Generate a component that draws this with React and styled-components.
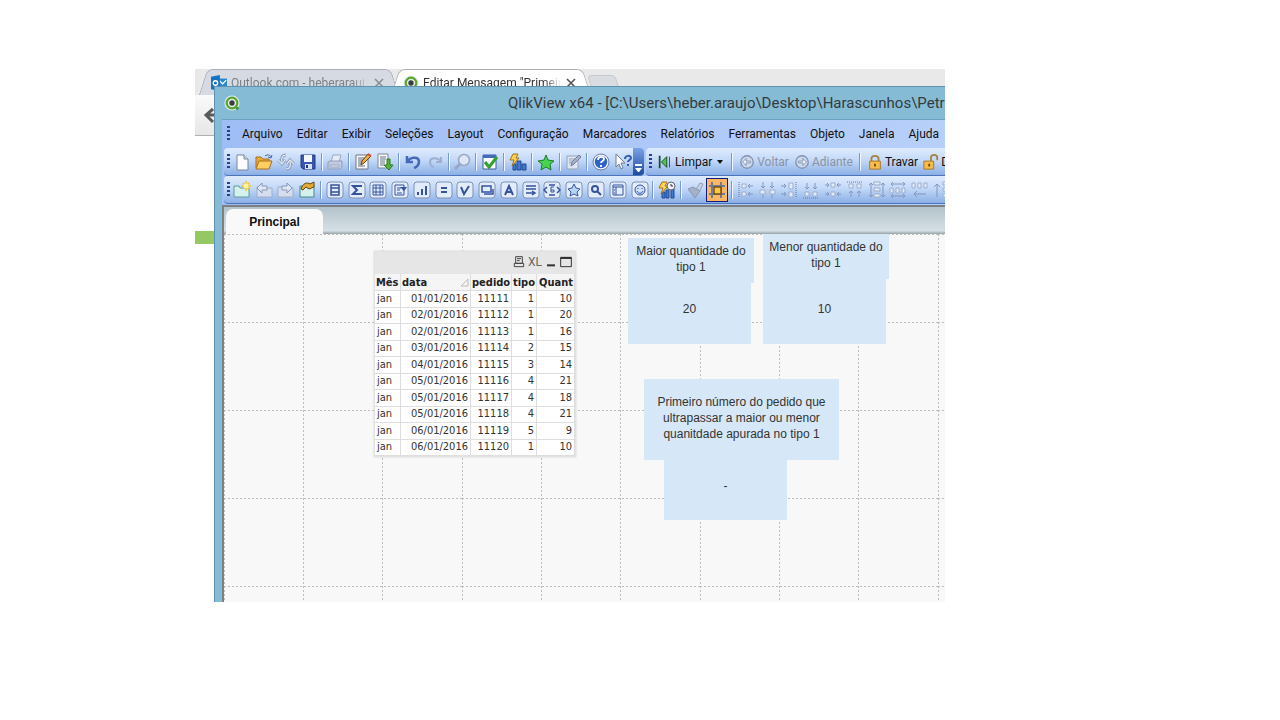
import React from "react";
import styled, { createGlobalStyle, css } from "styled-components";

const GlobalStyle = createGlobalStyle`
  * { box-sizing: border-box; }
  body { margin: 0; background: #fff; font-family: Roboto, "Liberation Sans", sans-serif; color: #111; }
  button { font: inherit; color: inherit; background: none; border: 0; padding: 0; margin: 0; }
  svg { display: block; flex: none; }
`;

const Page = styled.main`
  min-height: 100vh;
  padding: 69px 335px 118px 195px;
  display: flex;
`;

const Desktop = styled.div`
  flex: 1;
  min-width: 0;
  display: grid;
  grid-template-columns: minmax(0, 1fr);
  overflow: hidden;
`;

/* ---------- browser window at the back ---------- */

const Browser = styled.section`
  grid-area: 1 / 1;
  background: #fff;
`;

const TabStrip = styled.div`
  display: flex;
  height: 26px;
  padding-left: 8px;
  background: #e9e9e9;
`;

const BrowserTab = styled.button`
  position: relative;
  z-index: 0;
  display: flex;
  align-items: center;
  gap: 4px;
  width: 192px;
  padding: 2px 10px 0 8px;
  font-size: 12px;
  color: ${(p) => (p.$active ? "#333" : "#7b7f86")};
  &::before, &::after {
    content: "";
    position: absolute;
    z-index: -1;
    top: 0;
    bottom: 0;
    background: ${(p) => (p.$active ? "#fff" : "#d6dbe3")};
    border: 1px solid #a9adb3;
    border-bottom: 0;
  }
  &::before { left: 0; right: 50%; border-right: 0; border-radius: 6px 0 0 0; transform: skewX(-18deg); }
  &::after { right: 0; left: 49%; border-left: 0; border-radius: 0 6px 0 0; transform: skewX(18deg); }
`;

const TabLabel = styled.span`
  flex: 1;
  overflow: hidden;
  white-space: nowrap;
  text-align: left;
  mask-image: linear-gradient(to right, #000 88%, transparent);
`;

const NewTab = styled.button`
  width: 28px;
  height: 18px;
  margin: 6px 0 0 3px;
  border: 1px solid #c4c8cc;
  border-radius: 4px;
  background: #d9dde2;
  transform: skewX(18deg);
`;

const AddressBar = styled.div`
  display: flex;
  align-items: center;
  height: 41px;
  padding-left: 8px;
  background: linear-gradient(#fafafa, #e6e6e6);
  border-bottom: 1px solid #b0b0b0;
`;

const GreenBand = styled.div`
  height: 13px;
  margin-top: 95px;
  background: #95c765;
`;

/* ---------- QlikView window ---------- */

const AppWindow = styled.section`
  grid-area: 1 / 1;
  z-index: 1;
  min-width: 0;
  margin: 17px 0 0 19px;
  padding-left: 7px;
  display: flex;
  flex-direction: column;
  background: #86bbd6;
  border: solid #5d93ae;
  border-width: 1px 0 0 1px;
`;

const TitleBar = styled.header`
  display: flex;
  align-items: center;
  height: 33px;
  padding-left: 2px;
  overflow: hidden;
  border-bottom: 1px solid #6c9fc0;
`;

const WindowTitle = styled.h1`
  margin: 0 0 0 268px;
  font: 400 15px Roboto, sans-serif;
  white-space: nowrap;
  color: #333b40;
`;

const MenuBar = styled.nav`
  display: flex;
  align-items: center;
  height: 28px;
  overflow: hidden;
  padding-left: 5px;
  background: linear-gradient(to right, #9fbdf5, #b7d0fa);
`;

const MenuItems = styled.div`
  display: flex;
  gap: 14px;
  margin-left: 12px;
  font-size: 12px;
  white-space: nowrap;
`;

const Grip = styled.span`
  flex: none;
  width: 3px;
  height: 16px;
  background: repeating-linear-gradient(#27418a 0 2px, transparent 2px 4px);
`;

const Toolbars = styled.div`
  display: flex;
  flex-direction: column;
  padding: 0 0 1px 2px;
  background: linear-gradient(to right, #9fbdf5, #b7d0fa);
`;

const ToolRow = styled.div`
  display: flex;
  gap: 2px;
  overflow: hidden;
`;

const Bar = styled.div`
  display: flex;
  align-items: center;
  flex: ${(p) => (p.$grow ? "1 1 0" : "none")};
  min-width: 0;
  height: 28px;
  padding-left: 3px;
  overflow: hidden;
  border-bottom: 1px solid #4b75ba;
  border-radius: 4px ${(p) => (p.$grow ? "0 0" : "4px 4px")} 4px;
  background: linear-gradient(#dfebfd, #c3d9f8 45%, #8bafe6);
`;

const Tools = styled.div`
  display: flex;
  flex: none;
  align-items: center;
  justify-content: space-between;
  width: ${(p) => p.$width}px;
  margin-left: 2px;
`;

const Separator = styled.span`
  flex: none;
  width: 4px;
  height: 18px;
  background: linear-gradient(to right, transparent 1px, #7499d6 1px 2px, #f1f6ff 2px 3px, transparent 3px);
`;

const ToolButton = styled.button`
  flex: none;
  display: flex;
  align-items: center;
  justify-content: center;
  width: 20px;
  height: 24px;
  ${(p) => p.$pressed && css`
    width: 22px;
    background: #fdb663;
    border: 1px solid #101c7c;
  `}
`;

const TextTool = styled.button`
  display: flex;
  flex: none;
  align-items: center;
  gap: 2px;
  font-size: 12px;
  white-space: nowrap;
  color: ${(p) => (p.disabled ? "#8b93a4" : "#111")};
`;

const TextTools = styled.div`
  display: flex;
  align-items: center;
  gap: 5px;
  margin-left: 5px;
`;

const Overflow = styled.button`
  display: flex;
  align-items: flex-end;
  justify-content: center;
  align-self: stretch;
  width: 11px;
  margin-left: auto;
  padding-bottom: 3px;
  background: linear-gradient(#7aa2e6, #1f4b9f);
`;

/* ---------- sheet ---------- */

const Document = styled.div`
  flex: 1;
  display: flex;
  flex-direction: column;
  border: solid #7d7f82;
  border-width: 2px 0 0 2px;
`;

const SheetTabs = styled.div`
  display: flex;
  align-items: flex-end;
  height: 27px;
  padding-left: 2px;
  background: linear-gradient(#b3c3cb, #d5e0e5 88%, #98a3a9);
`;

const SheetTab = styled.button`
  width: 97px;
  height: 25px;
  border-radius: 7px 7px 0 0;
  background: #f9f9f9;
  font: 700 12px "Liberation Sans", sans-serif;
`;

const Sheet = styled.div`
  position: relative;
  flex: 1;
  min-height: 360px;
  overflow: hidden;
  background: #f8f8f8;
`;

const GridLines = styled.svg`
  position: absolute;
  width: 100%;
  height: 100%;
`;

const TextObject = styled.div`
  position: absolute;
  left: ${(p) => p.$x}px;
  top: ${(p) => p.$y}px;
  width: ${(p) => p.$w}px;
  height: ${(p) => p.$h}px;
  padding-bottom: 3px;
  display: flex;
  align-items: center;
  justify-content: center;
  background: #d6e7f7;
  color: #333;
  font: 12px/16px "Liberation Sans", sans-serif;
  text-align: center;
  white-space: pre-line;
`;

const TableObject = styled.section`
  position: absolute;
  left: 150px;
  top: 17px;
  width: 202px;
  border: 1px solid #e2e2e2;
  box-shadow: 0 0 2px #d0d0d0;
  background: #fff;
`;

const Caption = styled.div`
  display: flex;
  align-items: center;
  justify-content: flex-end;
  gap: 3px;
  height: 22px;
  padding: 0 3px 2px 0;
  background: #e6e6e6;
`;

const ExcelButton = styled.button`
  font: 12px "Liberation Sans Narrow", Roboto, sans-serif;
  color: #666;
`;

const DataTable = styled.table`
  width: 100%;
  table-layout: fixed;
  border-collapse: separate;
  border-spacing: 0;
  height: 182px;
  font: 11px/14px "DejaVu Sans Condensed", "DejaVu Sans", sans-serif;
  color: #333;
  th, td {
    padding: 0 2px;
    border: solid #dedede;
    border-width: 0 1px 1px 0;
    text-align: right;
    white-space: nowrap;
  }
  th { height: 17px; background: #f5f5f5; padding: 1px 1px 0; text-align: left; color: #222; }
  th:last-child { text-align: right; }
  td:first-child { text-align: left; }
`;

const SortHead = styled.span`
  display: flex;
  align-items: center;
  justify-content: space-between;
`;

/* ---------- icons ---------- */

const Icon = ({ children, size = 18 }) => (
  <svg width={size} height={size} viewBox="0 0 18 18" fill="none" aria-hidden="true">{children}</svg>
);

const navy = "#3653a0";
const grey = "#8296bd";

const icons = {
  file: <><path d="M4 2h7l4 4v11H4z" fill="#fdfdfd" stroke="#7c8797" /><path d="M11 2v4h4" fill="#d5dbe4" stroke="#7c8797" /></>,
  open: <><path d="M1 15V4h5l2 2h6v3" fill="#e8a93a" stroke="#a8701c" /><path d="M1 16 4 8h13l-3 8z" fill="#ffcd62" stroke="#a8701c" /><path d="M10 3c3-2 5-1 6 1m1-2-1 3-3-1" stroke="#3f62ac" /></>,
  refresh: <><path d="M9 2C5 2 4 5 5 9M1 7l4 4 3-4M9 16c4 0 5-3 4-7m-3 2 3-4 4 4" stroke="#8b9bb9" strokeWidth="3" /><path d="M9 2C5 2 4 5 5 9M1 7l4 4 3-4M9 16c4 0 5-3 4-7m-3 2 3-4 4 4" stroke="#e6ecf6" strokeWidth="1.2" /></>,
  save: <><path d="M2 2h14v14H4l-2-2z" fill="#3a55ae" stroke="#243a84" /><path d="M5 2h8v7H5z" fill="#f4f7fc" /><path d="M6 11h7v5H6z" fill="#dbe2ef" /><path d="M7 12h2v3H7z" fill="#243a84" /></>,
  print: <><path d="m5 9 2-7h8l-2 7" fill="#e7edf7" stroke="#9aa8c1" /><path d="m2 9 2-1h12v6l-2 2H2z" fill="#c1cce0" stroke="#8f9eba" /><path d="M4 12h9v2H4z" fill="#e2e9f4" stroke="#9aa8c1" /></>,
  edit: <><path d="M2 2h12v14H2z" fill="#f8f8f8" stroke="#6f7785" /><path d="M4 5h7M4 7h6M4 9h5M4 11h4M4 13h7" stroke="#636d7d" /><path d="m7 12 1-4 6-7 3 2-7 7z" fill="#f3b13c" stroke="#5c421d" /><path d="m14 1 3 2" stroke="#d2493f" strokeWidth="2" /></>,
  export: <><path d="M2 1h10v14H2z" fill="#f8f8f8" stroke="#7c8797" /><path d="M4 4h6M4 6h6M4 8h5M4 10h5M4 12h4" stroke="#6b7686" /><path d="M11 6h3v6h3l-4 5-5-5h3z" fill="#51b23c" stroke="#2c7a24" /></>,
  undo: <path d="M3 3v6h6M3 9c3-5 11-6 12-1 0 3-2 6-5 7" stroke="#4669b8" strokeWidth="2.6" />,
  redo: <path d="M15 4v5h-5M15 9C12 4 4 4 4 9c0 3 2 5 4 5" stroke="#9fb0cf" strokeWidth="2.2" />,
  search: <><circle cx="11" cy="7" r="5.5" fill="#dce6f4" stroke="#98a7c2" strokeWidth="1.5" /><path d="m7 11-5 5" stroke="#98a7c2" strokeWidth="3" /></>,
  check: <><path d="M2 2h13v14H2z" fill="#fff" stroke="#3a5ba2" /><path d="M2 2h13v3H2z" fill="#446bb9" /><path d="m4 9 4 5 8-10" stroke="#2fa12c" strokeWidth="3" /></>,
  chart: <><path d="M4 11h3v6H4zM8 8h4v9H8zM13 11h4v6h-4z" fill="#3f7ad1" stroke="#23498f" /><path d="M4 1h5L7 5h3l-7 8 2-6H1z" fill="#ffd54a" stroke="#a5701e" /></>,
  star: <path d="m9 2 2 5 6 1-4 3 1 6-5-3-5 3 1-6-4-3 6-1z" fill="#49d34b" stroke="#1c7a31" />,
  note: <><path d="M3 3h11v13H3z" fill="#dde5f2" stroke="#94a2bc" /><path d="M5 6h6M5 8h5M5 10h3" stroke="#94a2bc" /><path d="m7 13 1-4 7-7 2 2-7 7z" fill="#a7b4cc" stroke="#6d7d9b" /></>,
  help: <><circle cx="9" cy="9" r="7" fill="#2f62c8" stroke="#f5f8ff" strokeWidth="1.5" /><circle cx="9" cy="9" r="8" stroke="#6b7fa8" /><path d="M6 7c0-4 6-4 6-1 0 2-3 2-3 4m0 2v2" stroke="#fff" strokeWidth="1.8" /></>,
  whats: <><path d="M2 1v13l3-3 2 5 2-1-2-5h4z" fill="#fff" stroke="#6e7c94" /><path d="M11 6c0-4 6-4 6-1 0 2-3 2-3 4m0 2v2" stroke="#2f5fb8" strokeWidth="2" /></>,
  newSheet: <><path d="M1 16V5h5l1 2h9v9z" fill="#d5f1ee" stroke="#5b9c9c" /><path d="M13 0v10M8 5h10M10 2l6 6M16 2l-6 6" stroke="#f4c327" strokeWidth="1.5" /><circle cx="13" cy="5" r="2.5" fill="#fff3a0" /></>,
  prev: <><path d="M2 16V6h5l1 1h9v9z" fill="#d4deee" stroke="#9eadc7" /><path d="m2 7 5-5v3h5v4H7v3z" fill="#dfe7f4" stroke="#8797b6" /></>,
  next: <><path d="M1 16V6h5l1 1h9v9z" fill="#d4deee" stroke="#9eadc7" /><path d="m15 7-5-5v3H5v4h5v3z" fill="#dfe7f4" stroke="#8797b6" /></>,
  props: <><path d="M2 16V5h14v11z" fill="#d5f1ee" stroke="#438a86" /><path d="M3 8c2-6 6-7 9-5l4-2v5l-5 2-3-2-3 3z" fill="#e4aa37" stroke="#604316" /></>,
  brush: <><path d="m10 8 4-6 3 1-3 7z" fill="#c6d0e1" stroke="#95a3bd" /><path d="m2 8 5-2 7 4-5 7z" fill="#a4b1ca" stroke="#8997b3" /></>,
  gridSnap: <><path d="M1 5h16M1 13h16M4 1v16M13 1v16" stroke="#6e7d92" strokeWidth="2" /><path d="M6 6h7v7H6z" fill="#fbc841" stroke="#7a4c12" strokeWidth="1.5" /></>,
  chartClock: <><path d="M4 11h3v6H4zM8 9h3v8H8zM13 8h3v9h-3z" fill="#3f7ad1" stroke="#23498f" /><path d="M4 1h5L7 5h3l-7 8 2-6H1z" fill="#ffd54a" stroke="#a5701e" /><circle cx="13" cy="5" r="4" fill="#eef1f5" stroke="#5d6570" /><path d="M13 3v2h2" stroke="#333" /></>,
  lock: <><path d="M5 9V5c0-4 8-4 8 0v4" stroke="#a38342" strokeWidth="2" /><path d="M3 8h12v9H3z" fill="#f6bd4a" stroke="#a8701c" /><path d="M9 11v3" stroke="#70450d" strokeWidth="2" /></>,
  unlock: <><path d="M9 9V4c0-4 7-4 7 0v3" stroke="#a38342" strokeWidth="2" /><path d="M1 8h11v9H1z" fill="#f6bd4a" stroke="#a8701c" /><path d="M7 11v3" stroke="#70450d" strokeWidth="2" /></>,
  clear: <><path d="M3 2v14" stroke="#1c4a2a" strokeWidth="2" /><path d="M11 3v12L5 9z" fill="#49c653" stroke="#173f22" /><path d="M14 3v12" stroke="#1c4a2a" /></>,
  back: <><circle cx="9" cy="9" r="7" fill="#cdd9ec" stroke="#8191b1" strokeWidth="1.5" /><path d="m4 9 4-4v3h5v2H8v3z" fill="#eef3fb" stroke="#7d8eb0" /></>,
  forward: <><circle cx="9" cy="9" r="7" fill="#cdd9ec" stroke="#8191b1" strokeWidth="1.5" /><path d="m14 9-4-4v3H5v2h5v3z" fill="#eef3fb" stroke="#7d8eb0" /></>,
};

const glyphs = {
  list: <path d="M5 4h8v10H5zM5 7h8M5 11h8" stroke={navy} strokeWidth="1.5" />,
  sum: <path d="M13 6V5H5l4 4-4 4h8v-1" stroke={navy} strokeWidth="2" />,
  table: <path d="M4 4h10v10H4zM4 7h10M4 11h10M7 4v10M11 4v10" stroke={navy} />,
  multi: <><path d="M4 4h9v10H4zM6 7h4M6 9h3M6 12h5" stroke={navy} /><path d="M9 6h7l-3 4z" fill={navy} /></>,
  bars: <path d="M5 14v-3M9 14V8M13 14V5" stroke={navy} strokeWidth="2" />,
  input: <path d="M6 7h6M6 11h6" stroke={navy} strokeWidth="2" />,
  current: <path d="m5 6 3 7 5-8" stroke={navy} strokeWidth="2" />,
  button: <path d="M4 5h9v6H4zM6 13h9V8" stroke={navy} strokeWidth="1.5" />,
  text: <path d="m5 14 4-9 4 9M6 11h6" stroke={navy} strokeWidth="2" />,
  line: <path d="M4 5h10M4 8h10M4 12h9m-3-2 3 2-3 2" stroke={navy} strokeWidth="1.5" />,
  slider: <><path d="M6 4h6M6 14h6M4 6 1 9l3 3M14 6l3 3-3 3" stroke={navy} strokeWidth="1.5" /><path d="M11 6H8v5h3V9H8" stroke={navy} /></>,
  bookmark: <path d="m9 3 2 4 4 1-3 3 1 4-4-2-4 2 1-4-3-3 4-1z" fill="#b6d4f6" stroke={navy} />,
  find: <path d="M11 8a3 3 0 1 1-6 0 3 3 0 0 1 6 0m-1 2 4 4" stroke={navy} strokeWidth="2" />,
  container: <path d="M4 4h10v10H4zM4 6h10M7 6v8M5 9h1M5 12h1" stroke={navy} />,
  custom: <><circle cx="9" cy="9" r="5" fill="#cfe1fa" stroke={navy} /><path d="M7 7v1M11 7v1M6 10c1 3 5 3 6 0" stroke={navy} /></>,
};

/* each alignment icon: its boxes, then its arrows and guides */
const aligns = {
  left: ["M5 3h4v4H5zM5 11h4v4H5z", "M16 5h-5m2-2-2 2 2 2M16 13h-5m2-2-2 2 2 2", "M2 1v16"],
  centerH: ["M1 9h5v4H1zM11 9h5v4h-5z", "M4 1v6m-2-2 2 2 2-2M13 1v6m-2-2 2 2 2-2M4 17v-3M13 17v-3"],
  right: ["M9 2h4v6H9zM9 11h4v5H9z", "M1 5h5m-2-2 2 2-2 2M1 13h5m-2-2 2 2-2 2", "M16 1v16"],
  bottom: ["M3 11h4v4H3zM11 11h4v4h-4z", "M5 2v6M3 6l2 2 2-2M13 2v6m-2-2 2 2 2-2", "M1 17h16"],
  centerV: ["M7 2h4v4H7zM7 11h4v4H7z", "M1 4h4M3 2l2 2-2 2M17 4h-4m2-2-2 2 2 2M1 13h4m-2-2 2 2-2 2M17 13h-4m2-2-2 2 2 2"],
  top: ["M3 3h4v4H3zM11 3h4v4h-4z", "M5 16v-6m-2 2 2-2 2 2M13 16v-6m-2 2 2-2 2 2", "M1 1h16"],
  spaceV: ["M6 1h6v3H6zM6 7h6v3H6zM6 13h6v3H6z", "M3 2v14M1 4l2-2 2 2M1 14l2 2 2-2M15 2v14m-2-12 2-2 2 2m-4 10 2 2 2-2"],
  spaceH: ["M1 7h3v5H1zM7 7h3v5H7zM13 7h3v5h-3z", "M2 3h14M4 1 2 3l2 2M14 1l2 2-2 2M2 15h14M4 13l-2 2 2 2M14 13l2 2-2 2"],
  adjustH: ["M1 2h3v5H1zM7 2h3v5H7zM13 2h3v5h-3z", "M15 13H3m3-3-3 3 3 3"],
  adjustV: ["M10 1h6v3h-6zM10 7h6v3h-6zM10 13h6v3h-6z", "M4 16V3M1 6l3-3 3 3"],
};

const BoxedIcon = ({ children }) => (
  <Icon><rect x="1" y="1" width="16" height="16" rx="3" fill="#e3ecfa" stroke="#7f90b2" />{children}</Icon>
);

const AlignIcon = ({ parts: [boxes, arrows, guide] }) => (
  <Icon>
    <path d={boxes} fill="#e4ecf9" stroke="#9dadca" />
    <path d={arrows} stroke={grey} />
    {guide && <path d={guide} stroke="#5f78a8" strokeDasharray="1 1" />}
  </Icon>
);

const Tool = ({ name, label, pressed }) => (
  <ToolButton type="button" aria-label={label} $pressed={pressed} aria-pressed={pressed}>
    {icons[name] && <Icon>{icons[name]}</Icon>}
    {glyphs[name] && <BoxedIcon>{glyphs[name]}</BoxedIcon>}
    {aligns[name] && <AlignIcon parts={aligns[name]} />}
  </ToolButton>
);

const QlikLogo = ({ size }) => (
  <Icon size={size}>
    <circle cx="9" cy="9" r="8.5" fill="#e9ecea" />
    <path d="m12 12 4 4" stroke="#3f9a2f" strokeWidth="3" />
    <circle cx="9" cy="9" r="6" fill="#e9ecea" stroke="#55a630" strokeWidth="2.5" />
    <circle cx="9" cy="9" r="3" fill="#3a3f3d" />
  </Icon>
);

/* ---------- data ---------- */

const menus = ["Arquivo", "Editar", "Exibir", "Seleções", "Layout", "Configuração", "Marcadores", "Relatórios", "Ferramentas", "Objeto", "Janela", "Ajuda"];

const standardTools = [
  ["file", "Novo"], ["open", "Abrir"], ["refresh", "Atualizar"], ["save", "Salvar"], null,
  ["print", "Imprimir"], null, ["edit", "Editar script"], ["export", "Recarregar"], null,
  ["undo", "Desfazer"], ["redo", "Refazer"], null, ["search", "Pesquisar"], null,
  ["check", "Seleções atuais"], null, ["chart", "Gráfico rápido"], null, ["star", "Adicionar marcador"], null,
  ["note", "Notas"], null, ["help", "Ajuda"], ["whats", "O que é isto"],
];

const designTools = [
  ["newSheet", "Nova pasta"], ["prev", "Promover pasta"], ["next", "Rebaixar pasta"], ["props", "Propriedades"], null,
  ["list", "Lista"], ["sum", "Estatística"], ["table", "Tabela"], ["multi", "Seleção múltipla"], ["bars", "Gráfico"],
  ["input", "Caixa de entrada"], ["current", "Seleções"], ["button", "Botão"], ["text", "Texto"], ["line", "Linha"],
  ["slider", "Controle deslizante"], ["bookmark", "Marcador"], ["find", "Busca"], ["container", "Contêiner"], ["custom", "Personalizado"], null,
  ["chartClock", "Assistente de gráfico"], null, ["brush", "Pintor de formato"], ["gridSnap", "Grade", true], null,
  ["left", "Alinhar à esquerda"], ["centerH", "Centralizar horizontalmente"], ["right", "Alinhar à direita"],
  ["bottom", "Alinhar abaixo"], ["centerV", "Centralizar verticalmente"], ["top", "Alinhar acima"],
  ["spaceV", "Espaçar verticalmente"], ["spaceH", "Espaçar horizontalmente"], ["adjustH", "Ajustar à esquerda"], ["adjustV", "Ajustar acima"],
];

const rows = [
  ["jan", "01/01/2016", 11111, 1, 10],
  ["jan", "02/01/2016", 11112, 1, 20],
  ["jan", "02/01/2016", 11113, 1, 16],
  ["jan", "03/01/2016", 11114, 2, 15],
  ["jan", "04/01/2016", 11115, 3, 14],
  ["jan", "05/01/2016", 11116, 4, 21],
  ["jan", "05/01/2016", 11117, 4, 18],
  ["jan", "05/01/2016", 11118, 4, 21],
  ["jan", "06/01/2016", 11119, 5, 9],
  ["jan", "06/01/2016", 11120, 1, 10],
];

const textObjects = [
  { x: 404, y: 42, w: 123, h: 68, text: "20" },
  { x: 404, y: 4, w: 126, h: 45, text: "Maior quantidade do\ntipo 1" },
  { x: 539, y: 42, w: 123, h: 68, text: "10" },
  { x: 539, y: 0, w: 126, h: 45, text: "Menor quantidade do\ntipo 1" },
  { x: 420, y: 145, w: 195, h: 81, text: "Primeiro número do pedido que\nultrapassar a maior ou menor\nquanitdade apurada no tipo 1" },
  { x: 440, y: 220, w: 123, h: 66, text: "-" },
];

const ToolList = ({ tools, width }) => (
  <Tools $width={width}>
    {tools.map((t, i) => (t ? <Tool key={i} name={t[0]} label={t[1]} pressed={t[2]} /> : <Separator key={i} />))}
  </Tools>
);

export default function App() {
  return (
    <Page>
      <GlobalStyle />
      <Desktop>
        <Browser>
          <TabStrip>
            <BrowserTab type="button">
              <Icon size={16}>
                <path d="M8 4h10v10H8z" fill="#2b86cd" /><path d="m9 6 4 4 4-4" stroke="#fff" strokeWidth="1.5" />
                <path d="m0 2 10-2v18L0 16z" fill="#1673c2" /><circle cx="5" cy="9" r="2.5" stroke="#fff" strokeWidth="1.5" />
              </Icon>
              <TabLabel>Outlook.com - heberarauj</TabLabel>
              <Icon size={12}><path d="m3 3 12 12M15 3 3 15" stroke="#8a8f96" strokeWidth="2.5" /></Icon>
            </BrowserTab>
            <BrowserTab type="button" $active>
              <QlikLogo size={16} />
              <TabLabel>Editar Mensagem "Primeir</TabLabel>
              <Icon size={12}><path d="m3 3 12 12M15 3 3 15" stroke="#555" strokeWidth="2.5" /></Icon>
            </BrowserTab>
            <NewTab type="button" aria-label="Nova guia" />
          </TabStrip>
          <AddressBar>
            <button type="button" aria-label="Voltar">
              <Icon><path d="M17 9H3m7-6L3 9l7 7" stroke="#5a5a5a" strokeWidth="3" /></Icon>
            </button>
          </AddressBar>
          <GreenBand />
        </Browser>

        <AppWindow>
          <TitleBar>
            <QlikLogo size={16} />
            <WindowTitle>QlikView x64 - [C:\Users\heber.araujo\Desktop\Harascunhos\Petro</WindowTitle>
          </TitleBar>
          <MenuBar>
            <Grip />
            <MenuItems>{menus.map((m) => <button type="button" key={m}>{m}</button>)}</MenuItems>
          </MenuBar>
          <Toolbars>
            <ToolRow>
              <Bar>
                <Grip />
                <ToolList tools={standardTools} width={401} />
                <Overflow type="button" aria-label="Mais botões">
                  <svg width="7" height="8" viewBox="0 0 7 8" aria-hidden="true"><path d="M0 0h7v2H0zM0 4h7L4 8H3z" fill="#fff" /></svg>
                </Overflow>
              </Bar>
              <Bar $grow>
                <Grip />
                <TextTools>
                  <TextTool type="button">
                    <Icon size={16}>{icons.clear}</Icon>Limpar
                    <svg width="11" height="4" viewBox="0 0 11 4" aria-hidden="true"><path d="M3 0h6L6 4z" fill="#111" /></svg>
                  </TextTool>
                  <Separator />
                  <TextTool type="button" disabled><Icon size={16}>{icons.back}</Icon>Voltar</TextTool>
                  <TextTool type="button" disabled><Icon size={16}>{icons.forward}</Icon>Adiante</TextTool>
                  <Separator />
                  <TextTool type="button"><Icon size={16}>{icons.lock}</Icon>Travar</TextTool>
                  <TextTool type="button"><Icon size={16}>{icons.unlock}</Icon>D</TextTool>
                </TextTools>
              </Bar>
            </ToolRow>
            <ToolRow>
              <Bar $grow>
                <Grip />
                <ToolList tools={designTools} width={720} />
              </Bar>
            </ToolRow>
          </Toolbars>
          <Document>
            <SheetTabs><SheetTab type="button">Principal</SheetTab></SheetTabs>
            <Sheet>
              <GridLines aria-hidden="true">
                <defs>
                  <pattern id="sheet-grid" width="238" height="88" patternUnits="userSpaceOnUse">
                    <path d="M0 .5h238M.5 0v88M79.5 0v88M158.5 0v88" stroke="#bdbdbd" strokeDasharray="2 2" />
                  </pattern>
                </defs>
                <rect width="100%" height="100%" fill="url(#sheet-grid)" />
              </GridLines>
              <TableObject>
                <Caption>
                  <button type="button" aria-label="Imprimir">
                    <Icon size={12}><path d="M4 1h10v10H4zM6 4h6M6 7h4M2 11h14v5H2z" stroke="#444" strokeWidth="1.5" /></Icon>
                  </button>
                  <ExcelButton type="button">XL</ExcelButton>
                  <button type="button" aria-label="Minimizar">
                    <Icon size={12}><path d="M3 14h12" stroke="#333" strokeWidth="3" /></Icon>
                  </button>
                  <button type="button" aria-label="Maximizar">
                    <Icon size={12}><path d="M1 2h16v14H1z" stroke="#333" strokeWidth="1.5" /><path d="M1 3h16" stroke="#333" strokeWidth="3" /></Icon>
                  </button>
                </Caption>
                <DataTable>
                  <colgroup>
                    <col width="26" /><col width="70" /><col width="41" /><col width="25" /><col width="38" />
                  </colgroup>
                  <thead>
                    <tr>
                      <th>Mês</th>
                      <th>
                        <SortHead>data
                          <svg width="9" height="9" viewBox="0 0 9 9" aria-hidden="true"><path d="M1 8h7V1z" fill="none" stroke="#bbb" /></svg>
                        </SortHead>
                      </th>
                      <th>pedido</th><th>tipo</th><th>Quant</th>
                    </tr>
                  </thead>
                  <tbody>
                    {rows.map((r) => <tr key={r[2]}>{r.map((c, i) => <td key={i}>{c}</td>)}</tr>)}
                  </tbody>
                </DataTable>
              </TableObject>
              {textObjects.map((o) => (
                <TextObject key={o.text} $x={o.x} $y={o.y} $w={o.w} $h={o.h}>{o.text}</TextObject>
              ))}
            </Sheet>
          </Document>
        </AppWindow>
      </Desktop>
    </Page>
  );
}
